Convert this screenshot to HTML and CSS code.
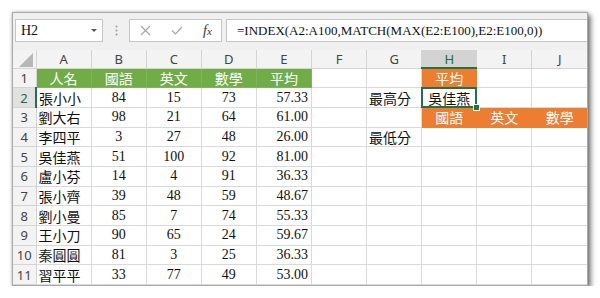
FILE: index.html
```html
<!DOCTYPE html>
<html lang="zh-Hant">
<head>
  <meta charset="UTF-8">
  <title>INDEX MATCH</title>
  <link rel="stylesheet" href="styles.css">
</head>
<body>
  <div class="window">
    <div class="toolbar">
      <div class="namebox">
        <span>H2</span>
        <span class="caret"></span>
      </div>
      <div class="grip">
        <svg width="3" height="11" viewBox="0 0 3 11"><circle cx="1.5" cy="1.5" r="1" fill="#9a9a9a"/><circle cx="1.5" cy="5.5" r="1" fill="#9a9a9a"/><circle cx="1.5" cy="9.5" r="1" fill="#9a9a9a"/></svg>
      </div>
      <div class="fxbox">
        <svg class="ico-x" width="11" height="11" viewBox="0 0 11 11"><path d="M1 1L10 10M10 1L1 10" stroke="#a6a6a6" stroke-width="1.2" fill="none"/></svg>
        <svg class="ico-ok" width="12" height="9" viewBox="0 0 12 9"><path d="M1 4.5L4.5 8L11 1" stroke="#a6a6a6" stroke-width="1.2" fill="none"/></svg>
        <span class="fx">f<span class="fx-sub">x</span></span>
      </div>
      <div class="formula">=INDEX(A2:A100,MATCH(MAX(E2:E100),E2:E100,0))</div>
    </div>

    <table class="sheet">
      <colgroup>
        <col class="rh">
        <col class="c" span="10">
      </colgroup>
      <thead>
        <tr>
          <th class="corner"><svg width="14" height="14" viewBox="0 0 14 14"><polygon points="0,14 14,14 14,0" fill="#b7b7b7"/></svg></th>
          <th>A</th><th>B</th><th>C</th><th>D</th><th>E</th><th>F</th><th>G</th><th class="sel">H</th><th>I</th><th>J</th>
        </tr>
      </thead>
      <tbody>
        <tr>
          <th>1</th>
          <td class="green">人名</td><td class="green">國語</td><td class="green">英文</td><td class="green">數學</td><td class="green">平均</td>
          <td></td><td></td><td class="orange">平均</td><td></td><td></td>
        </tr>
        <tr>
          <th class="sel-row">2</th>
          <td class="name">張小小</td><td>84</td><td>15</td><td>73</td><td class="avg">57.33</td>
          <td></td><td class="label">最高分</td><td class="cn active">吳佳燕</td><td></td><td></td>
        </tr>
        <tr>
          <th>3</th>
          <td class="name">劉大右</td><td>98</td><td>21</td><td>64</td><td class="avg">61.00</td>
          <td></td><td></td><td class="orange">國語</td><td class="orange">英文</td><td class="orange">數學</td>
        </tr>
        <tr>
          <th>4</th>
          <td class="name">李四平</td><td>3</td><td>27</td><td>48</td><td class="avg">26.00</td>
          <td></td><td class="label">最低分</td><td></td><td></td><td></td>
        </tr>
        <tr>
          <th>5</th>
          <td class="name">吳佳燕</td><td>51</td><td>100</td><td>92</td><td class="avg">81.00</td>
          <td></td><td></td><td></td><td></td><td></td>
        </tr>
        <tr>
          <th>6</th>
          <td class="name">盧小芬</td><td>14</td><td>4</td><td>91</td><td class="avg">36.33</td>
          <td></td><td></td><td></td><td></td><td></td>
        </tr>
        <tr>
          <th>7</th>
          <td class="name">張小齊</td><td>39</td><td>48</td><td>59</td><td class="avg">48.67</td>
          <td></td><td></td><td></td><td></td><td></td>
        </tr>
        <tr>
          <th>8</th>
          <td class="name">劉小曼</td><td>85</td><td>7</td><td>74</td><td class="avg">55.33</td>
          <td></td><td></td><td></td><td></td><td></td>
        </tr>
        <tr>
          <th>9</th>
          <td class="name">王小刀</td><td>90</td><td>65</td><td>24</td><td class="avg">59.67</td>
          <td></td><td></td><td></td><td></td><td></td>
        </tr>
        <tr>
          <th>10</th>
          <td class="name">秦圓圓</td><td>81</td><td>3</td><td>25</td><td class="avg">36.33</td>
          <td></td><td></td><td></td><td></td><td></td>
        </tr>
        <tr>
          <th>11</th>
          <td class="name">習平平</td><td>33</td><td>77</td><td>49</td><td class="avg">53.00</td>
          <td></td><td></td><td></td><td></td><td></td>
        </tr>
      </tbody>
    </table>
  </div>
</body>
</html>
```

FILE: styles.css
```css
body { margin: 0; background: #fff; font-family: "Liberation Serif", "Noto Sans CJK TC", serif; color: #111; }

.window {
  margin: 12px 0 0 12px;
  width: 576px;
  box-sizing: border-box;
  border: 1px solid #a9a9a9;
  background: #fff;
  box-shadow: 3px 3px 5px rgba(0, 0, 0, .5), 0 0 3px rgba(0, 0, 0, .25);
}

/* formula bar */
.toolbar { display: flex; align-items: flex-start; height: 37px; box-sizing: border-box; padding: 6px 0 0 2px; background: #f0f0f0; }
.namebox { width: 88px; height: 23px; box-sizing: border-box; border: 1px solid #c6c6c6; background: #fff; display: flex; align-items: center; padding-left: 5px; font-size: 14px; }
.caret { margin-left: auto; margin-right: 5px; border-left: 3px solid transparent; border-right: 3px solid transparent; border-top: 3px solid #555; }
.grip { width: 26px; height: 23px; display: flex; align-items: center; justify-content: center; }
.fxbox { width: 93px; height: 23px; box-sizing: border-box; border: 1px solid #c6c6c6; background: #fff; display: flex; align-items: center; }
.ico-x { margin-left: 10px; }
.ico-ok { margin-left: 20px; }
.fx { margin-left: 20px; font-style: italic; font-size: 14px; color: #333; }
.fx-sub { font-size: 11px; }
.formula { flex: 1; height: 23px; margin-left: 4px; box-sizing: border-box; border: 1px solid #c6c6c6; border-right: none; background: #fff; padding-left: 10px; font-size: 13px; line-height: 21px; white-space: nowrap; }

/* grid */
.sheet { border-collapse: collapse; table-layout: fixed; width: 574px; }
col.rh { width: 23px; }
col.c { width: 55.1px; }
th, td { border: 1px solid #dadada; padding: 0 3px; white-space: nowrap; overflow: hidden; line-height: 16px; }
tr > :first-child { border-left: none; }
tr > :last-child { border-right: none; }
thead th { border-top: none; height: 17px; }
tbody tr { height: 19.7px; }

th { background: #f3f3f3; font-family: "Noto Sans", sans-serif; font-size: 13px; font-weight: normal; color: #444; text-align: center; border-color: #d4d4d4; }
th.corner { padding: 0; text-align: right; vertical-align: bottom; }
th.corner svg { display: block; margin: 0 3px 1px auto; }
th.sel { background: #d3d3d3; color: #1e6b41; border-bottom: 2px solid #217346; }
th.sel-row { background: #e1e1e1; color: #1e6b41; border-right: 2px solid #217346; }

td { font-size: 14px; text-align: center; }
td.name, td.label, td.cn, td.green, td.orange { font-family: "Noto Sans CJK TC", sans-serif; font-size: 14px; }
td.name, td.label { text-align: left; padding-left: 2px; }
td.avg { text-align: right; padding-right: 3px; }
td.green { background: #70ad47; color: #fff; border-color: #7db558; }
td.orange { background: #ed7d31; color: #fff; border-color: #ed7d31; }

td.active { position: relative; overflow: visible; }
td.active::before { content: ""; position: absolute; left: -1px; top: -1px; right: -1px; bottom: -1px; border: 2px solid #217346; }
td.active::after { content: ""; position: absolute; right: -4px; bottom: -4px; width: 5px; height: 5px; background: #217346; border: 1px solid #fff; }
```
